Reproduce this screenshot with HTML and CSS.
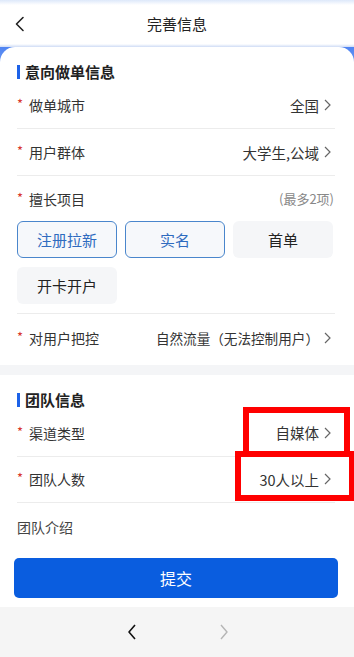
FILE: index.html
```html
<!DOCTYPE html>
<html lang="zh-CN">
<head>
<meta charset="utf-8">
<title>完善信息</title>
<link rel="stylesheet" href="styles.css">
</head>
<body>
<div class="page">
  <header class="topbar">
    <svg class="back" width="12" height="16" viewBox="0 0 12 16"><polyline points="9,1.5 2.5,8 9,14.5" fill="none" stroke="#222" stroke-width="1.6" stroke-linecap="round" stroke-linejoin="round"/></svg>
    <h1 class="title">完善信息</h1>
  </header>

  <main class="content">
    <section class="card card-first">
      <h2 class="sec-title">意向做单信息</h2>
      <div class="row">
        <span class="label"><i class="star">*</i>做单城市</span>
        <span class="value">全国<svg class="chev" width="9" height="14" viewBox="0 0 9 14"><polyline points="2,2 7,7 2,12" fill="none" stroke="#666" stroke-width="1.2"/></svg></span>
      </div>
      <div class="row">
        <span class="label"><i class="star">*</i>用户群体</span>
        <span class="value">大学生,公域<svg class="chev" width="9" height="14" viewBox="0 0 9 14"><polyline points="2,2 7,7 2,12" fill="none" stroke="#666" stroke-width="1.2"/></svg></span>
      </div>
      <div class="row row-chips">
        <div class="row-head">
          <span class="label"><i class="star">*</i>擅长项目</span>
          <span class="hint">(最多2项)</span>
        </div>
        <div class="chips">
          <span class="chip chip-on">注册拉新</span>
          <span class="chip chip-on">实名</span>
          <span class="chip">首单</span>
          <span class="chip">开卡开户</span>
        </div>
      </div>
      <div class="row row-last">
        <span class="label"><i class="star">*</i>对用户把控</span>
        <span class="value value-long">自然流量（无法控制用户）<svg class="chev" width="9" height="14" viewBox="0 0 9 14"><polyline points="2,2 7,7 2,12" fill="none" stroke="#666" stroke-width="1.2"/></svg></span>
      </div>
    </section>

    <section class="card card-second">
      <h2 class="sec-title">团队信息</h2>
      <div class="row row-team">
        <span class="label"><i class="star">*</i>渠道类型</span>
        <span class="value">自媒体<svg class="chev" width="9" height="14" viewBox="0 0 9 14"><polyline points="2,2 7,7 2,12" fill="none" stroke="#666" stroke-width="1.2"/></svg></span>
      </div>
      <div class="row row-team">
        <span class="label"><i class="star">*</i>团队人数</span>
        <span class="value">30人以上<svg class="chev" width="9" height="14" viewBox="0 0 9 14"><polyline points="2,2 7,7 2,12" fill="none" stroke="#666" stroke-width="1.2"/></svg></span>
      </div>
      <div class="row row-plain">
        <span class="label label-plain">团队介绍</span>
      </div>
      <div class="submit-wrap">
        <button class="submit" type="button">提交</button>
      </div>
    </section>
  </main>

  <nav class="bottombar">
    <svg width="12" height="18" viewBox="0 0 12 18"><polyline points="9,2 3,9 9,16" fill="none" stroke="#111" stroke-width="1.6" stroke-linejoin="round"/></svg>
    <svg width="12" height="18" viewBox="0 0 12 18"><polyline points="3,2 9,9 3,16" fill="none" stroke="#b5b5b5" stroke-width="1.4" stroke-linejoin="round"/></svg>
  </nav>

  <div class="mark mark-1"></div>
  <div class="mark mark-2"></div>
</div>
</body>
</html>
```

FILE: styles.css
```css
* { box-sizing: border-box; }
html, body { margin: 0; padding: 0; }
body {
  font-family: "Noto Sans CJK SC", "Noto Sans", sans-serif;
  color: #333;
  background: #f4f5f7;
}
.page {
  position: relative;
  width: 354px;
  height: 657px;
  overflow: hidden;
  display: flex;
  flex-direction: column;
}
.topbar {
  height: 47px;
  flex: none;
  display: flex;
  align-items: center;
  justify-content: center;
  position: relative;
  background: linear-gradient(#dde8fa 0, #ffffff 5px, #ffffff 44px, #cfdcf5 47px);
}
.back {
  position: absolute;
  left: 14px;
  top: 16px;
}
.title {
  margin: 0;
  font-size: 15px;
  font-weight: 400;
  color: #222;
  line-height: 20px;
}
.content {
  flex: 1;
  background: linear-gradient(#4f84f2 0, #6b98f2 18px, #f4f5f7 18px);
}
.card {
  background: #fff;
  padding: 0 0 0 17px;
}
.card-first {
  border-radius: 15px 15px 0 0;
  padding-top: 15px;
  height: 318px;
}
.card-second {
  margin-top: 10px;
  padding-top: 15px;
  height: 232px;
}
.sec-title {
  margin: 0;
  font-size: 15px;
  font-weight: 700;
  color: #222;
  line-height: 20px;
  height: 20px;
  display: flex;
  align-items: center;
}
.sec-title::before {
  content: "";
  width: 3px;
  height: 14px;
  background: #1d62e8;
  margin-right: 5px;
}
.row {
  height: 47px;
  margin-right: 19px;
  display: flex;
  align-items: center;
  justify-content: space-between;
  border-bottom: 1px solid #ececec;
  font-size: 14px;
}
.row-team { height: 46.5px; }
.row-last, .row-plain { border-bottom: none; }
.label {
  display: flex;
  align-items: center;
  color: #333;
}
.label-plain { color: #444; }
.star {
  font-style: normal;
  color: #d8362d;
  font-size: 13px;
  width: 12px;
  margin-top: -3px;
}
.value {
  display: flex;
  align-items: center;
  color: #333;
  font-size: 14.5px;
}
.value-long { font-size: 13.6px; }
.chev { margin-left: 4px; margin-right: 3px; }
.row-chips {
  height: auto;
  display: block;
  padding-bottom: 9px;
}
.row-head {
  height: 45px;
  display: flex;
  align-items: center;
  justify-content: space-between;
}
.hint { color: #888; font-size: 13px; margin-right: 1px; }
.chips {
  display: grid;
  grid-template-columns: repeat(3, 100px);
  column-gap: 8px;
  row-gap: 9px;
}
.chip {
  height: 37px;
  border-radius: 6px;
  background: #f5f6f8;
  color: #222;
  font-size: 15px;
  display: flex;
  align-items: center;
  justify-content: center;
}
.chip-on {
  border: 1px solid #4a86cc;
  color: #2f6bbf;
  background: #f6f8fb;
}
.submit-wrap {
  margin-left: -3px;
  margin-right: 16px;
  padding-top: 8px;
}
.submit {
  width: 100%;
  height: 40px;
  border: none;
  border-radius: 5px;
  background: #0a5ddf;
  color: #fff;
  font-family: inherit;
  font-size: 16px;
}
.bottombar {
  height: 50px;
  flex: none;
  background: #f5f5f5;
  display: flex;
  align-items: center;
  justify-content: center;
  gap: 80px;
  padding-left: 2px;
}
.mark {
  position: absolute;
  border: 6px solid #ff0000;
}
.mark-1 { left: 243px; top: 407px; width: 107px; height: 50px; }
.mark-2 { left: 235px; top: 451px; width: 120px; height: 50px; }
```
